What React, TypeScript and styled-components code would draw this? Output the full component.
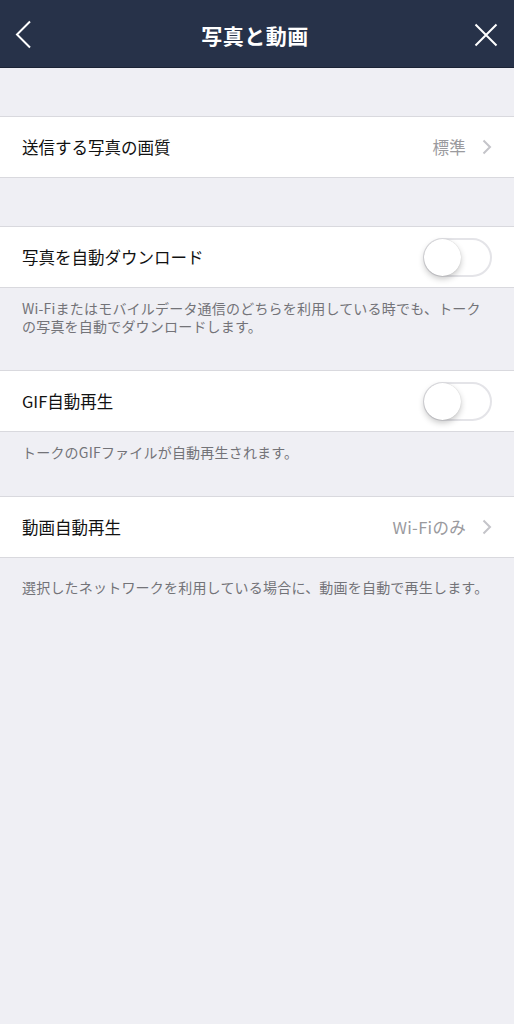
import React from "react";
import styled, { createGlobalStyle } from "styled-components";

const GlobalStyle = createGlobalStyle`
  html, body {
    margin: 0;
    padding: 0;
    background: #efeff4;
  }
  body {
    font-family: "Noto Sans CJK JP", "Noto Sans", sans-serif;
    -webkit-font-smoothing: antialiased;
  }
`;

const Screen = styled.div`
  width: 514px;
  min-height: 1024px;
  background: #efeff4;
  display: flex;
  flex-direction: column;
`;

const Header = styled.header`
  height: 68px;
  background: #273249;
  border-bottom: 1px solid #1b2335;
  display: flex;
  align-items: center;
  justify-content: space-between;
  padding: 3px 14px 0 10px;
  box-sizing: border-box;
`;

const HeaderButton = styled.button`
  width: 28px;
  height: 32px;
  padding: 0;
  border: none;
  background: none;
  display: flex;
  align-items: center;
  justify-content: center;
  color: #ffffff;
`;

const Title = styled.h1`
  margin: 0;
  font-size: 21px;
  font-weight: 700;
  color: #ffffff;
  letter-spacing: 0.5px;
`;

const Spacer = styled.div`
  height: 48px;
`;

const Row = styled.div`
  height: 60px;
  background: #ffffff;
  border-top: 1px solid #d9d9de;
  border-bottom: 1px solid #d9d9de;
  display: flex;
  align-items: center;
  padding: 0 22px;
`;

const Label = styled.span`
  flex: 1;
  font-size: 16.5px;
  color: #111111;
`;

const Value = styled.span`
  font-size: 16.5px;
  color: #9a9a9e;
  margin-right: 16px;
  letter-spacing: 0.3px;
`;

const Note = styled.p<{ $top?: number }>`
  margin: 0;
  padding: ${(p) => p.$top ?? 11}px 24px 35px 22px;
  font-size: 14px;
  line-height: 18px;
  letter-spacing: 0.2px;
  color: #737378;
`;

const Track = styled.div`
  width: 69px;
  height: 39px;
  box-sizing: border-box;
  border: 2px solid #e4e4e8;
  border-radius: 20px;
  background: #ffffff;
  position: relative;
`;

const Knob = styled.div`
  position: absolute;
  left: -1px;
  top: -1px;
  width: 37px;
  height: 37px;
  border-radius: 50%;
  background: #ffffff;
  box-shadow: 0 3px 6px rgba(0, 0, 0, 0.22), 0 0 1px rgba(0, 0, 0, 0.2);
`;

const Chevron = () => (
  <svg width="10" height="16" viewBox="0 0 10 16">
    <path d="M1.5 1.5 L8 8 L1.5 14.5" fill="none" stroke="#c4c4c9" strokeWidth="2" />
  </svg>
);

const Toggle = () => (
  <Track>
    <Knob />
  </Track>
);

export default function App() {
  return (
    <>
      <GlobalStyle />
      <Screen>
        <Header>
          <HeaderButton aria-label="戻る">
            <svg width="18" height="30" viewBox="0 0 18 30">
              <path d="M15 1.5 L2 14.5 L15 27.5" fill="none" stroke="#fff" strokeWidth="2" />
            </svg>
          </HeaderButton>
          <Title>写真と動画</Title>
          <HeaderButton aria-label="閉じる">
            <svg width="24" height="24" viewBox="0 0 24 24">
              <path d="M1.5 1.5 L22.5 22.5 M22.5 1.5 L1.5 22.5" fill="none" stroke="#fff" strokeWidth="2" />
            </svg>
          </HeaderButton>
        </Header>
        <Spacer />
        <Row>
          <Label>送信する写真の画質</Label>
          <Value>標準</Value>
          <Chevron />
        </Row>
        <Spacer />
        <Row>
          <Label>写真を自動ダウンロード</Label>
          <Toggle />
        </Row>
        <Note>
          Wi-Fiまたはモバイルデータ通信のどちらを利用している時でも、トークの写真を自動でダウンロードします。
        </Note>
        <Row>
          <Label>GIF自動再生</Label>
          <Toggle />
        </Row>
        <Note>トークのGIFファイルが自動再生されます。</Note>
        <Row>
          <Label>動画自動再生</Label>
          <Value>Wi-Fiのみ</Value>
          <Chevron />
        </Row>
        <Note $top={20}>選択したネットワークを利用している場合に、動画を自動で再生します。</Note>
      </Screen>
    </>
  );
}
